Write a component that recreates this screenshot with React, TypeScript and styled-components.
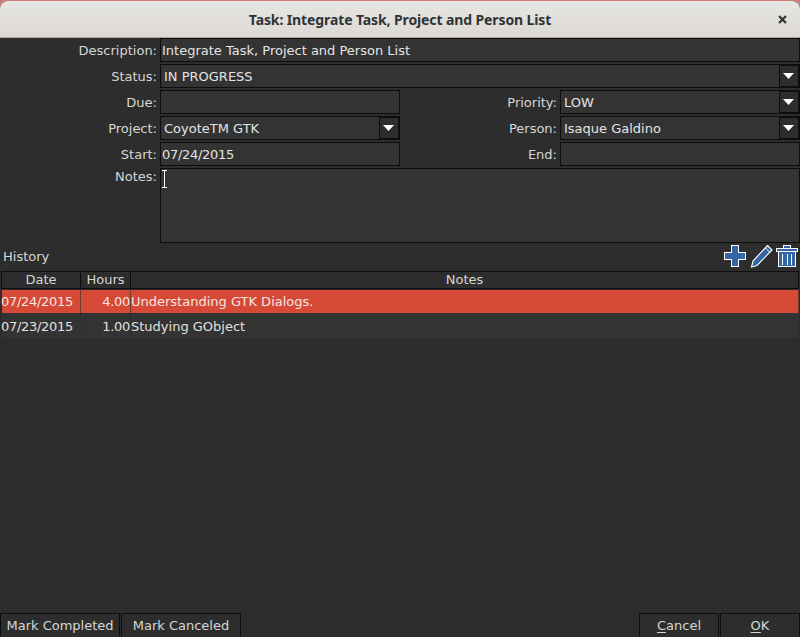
import styled, { createGlobalStyle } from 'styled-components';

const GlobalStyle = createGlobalStyle`
  html, body {
    margin: 0;
    padding: 0;
    width: 800px;
    height: 637px;
    overflow: hidden;
    background: #cf7d79;
  }
`;

const Window = styled.div`
  width: 800px;
  height: 636px;
  margin-top: 1px;
  display: flex;
  flex-direction: column;
  background: #2d2d2d;
  color: #d6d6d6;
  font-family: 'DejaVu Sans', sans-serif;
  font-size: 13px;
  border-radius: 8px 8px 0 0;
  overflow: hidden;
`;

const TitleBar = styled.div`
  height: 36px;
  flex: none;
  position: relative;
  display: flex;
  align-items: center;
  justify-content: center;
  background: linear-gradient(#e8e6e3, #dcd9d5);
  border-bottom: 1px solid #a8a49e;
  color: #2e3436;
  font-family: 'Noto Sans', sans-serif;
  font-weight: 700;
  font-size: 14px;
  letter-spacing: -0.11px;
`;

const CloseButton = styled.svg`
  position: absolute;
  right: 13px;
  top: 14px;
  width: 9px;
  height: 9px;
`;

const FormGrid = styled.div`
  display: grid;
  grid-template-columns: 160px 240px 160px 240px;
  row-gap: 2px;
  flex: none;
`;

const Label = styled.div`
  display: flex;
  align-items: center;
  justify-content: flex-end;
  padding-right: 3px;
  white-space: nowrap;
`;

const NotesLabel = styled(Label)`
  align-items: flex-start;
  padding-top: 1px;
`;

const Field = styled.div<{ $span?: number }>`
  grid-column: span ${(p) => p.$span ?? 1};
  box-sizing: border-box;
  height: 24px;
  display: flex;
  align-items: center;
  padding-left: 1px;
  background: #333333;
  border: 1px solid #0d0d0d;
  color: #e4e4e4;
  white-space: nowrap;
`;

const ComboField = styled(Field)`
  padding-left: 3px;
  justify-content: space-between;
`;

const ComboArrow = styled.div`
  box-sizing: border-box;
  width: 20px;
  height: 22px;
  flex: none;
  display: flex;
  align-items: center;
  justify-content: center;
  padding: 0 1px 1px 0;
  background: #2d2d2d;
  border: 1px solid #0d0d0d;
`;

const DateText = styled.span`
  letter-spacing: -0.3px;
`;

const NotesArea = styled.div`
  grid-column: span 3;
  box-sizing: border-box;
  height: 75px;
  background: #333333;
  border: 1px solid #0d0d0d;
  position: relative;
`;

const Caret = styled.svg`
  position: absolute;
  left: 1px;
  top: 1px;
  width: 5px;
  height: 18px;
`;

const HistoryBar = styled.div`
  flex: none;
  height: 27px;
  display: flex;
  align-items: center;
  justify-content: space-between;
  padding: 0 1px 0 3px;
`;

const ToolIcons = styled.div`
  display: flex;
  gap: 2px;
  align-items: center;
  margin-bottom: 1px;
`;

const ToolIcon = styled.svg`
  width: 24px;
  height: 24px;
  display: block;
`;

const Table = styled.div`
  flex: none;
  margin: 1px 1px 0 1px;
`;

const HeaderRow = styled.div`
  display: grid;
  grid-template-columns: 80px 50px 1fr;
  height: 18px;
  margin-bottom: 1px;
`;

const HeaderCell = styled.div`
  box-sizing: border-box;
  display: flex;
  align-items: center;
  justify-content: center;
  padding-bottom: 1px;
  border: 1px solid #0d0d0d;
  border-left: none;
  color: #d6d6d6;

  &:first-child {
    border-left: 1px solid #0d0d0d;
  }
`;

const Row = styled.div<{ $selected?: boolean; $height: number }>`
  display: grid;
  grid-template-columns: 79px 50px 1fr;
  height: ${(p) => p.$height}px;
  line-height: ${(p) => (p.$selected ? p.$height + 1 : p.$height + 3)}px;
  margin-left: 1px;
  background: ${(p) => (p.$selected ? '#d64937' : '#333333')};
  color: ${(p) => (p.$selected ? '#f6e4e0' : '#e0e0e0')};
`;

const Cell = styled.div<{ $right?: boolean }>`
  box-sizing: border-box;
  height: 100%;
  border-right: 1px solid rgba(45, 45, 45, 0.6);
  text-align: ${(p) => (p.$right ? 'right' : 'left')};
  white-space: nowrap;
`;

const DateCell = styled(Cell)`
  margin-left: -1px;
`;

const Spacer = styled.div`
  flex: 1;
`;

const ButtonBar = styled.div`
  flex: none;
  height: 24px;
  display: flex;
  justify-content: space-between;
`;

const ButtonGroup = styled.div`
  display: flex;
  gap: 1px;
`;

const Button = styled.div<{ $width: number }>`
  box-sizing: border-box;
  width: ${(p) => p.$width}px;
  height: 24px;
  display: flex;
  align-items: center;
  justify-content: center;
  background: #2d2d2d;
  border: 1px solid #0d0d0d;
  border-bottom: none;
  color: #d6d6d6;
  white-space: nowrap;

  u {
    text-underline-offset: 2px;
  }
`;

const Arrow = () => (
  <svg width="11" height="6" viewBox="0 0 11 6">
    <path d="M0 0h11L5.5 6z" fill="#ffffff" />
  </svg>
);

const BLUE = '#3465a4';

const App = () => (
  <>
    <GlobalStyle />
    <Window>
      <TitleBar>
        Task: Integrate Task, Project and Person List
        <CloseButton viewBox="0 0 9 9">
          <path d="M1 1l7 7M8 1l-7 7" stroke="#2e3436" strokeWidth="2.2" />
        </CloseButton>
      </TitleBar>
      <FormGrid>
        <Label>Description:</Label>
        <Field $span={3}>Integrate Task, Project and Person List</Field>
        <Label>Status:</Label>
        <ComboField $span={3}>
          <span>IN PROGRESS</span>
          <ComboArrow><Arrow /></ComboArrow>
        </ComboField>
        <Label>Due:</Label>
        <Field />
        <Label>Priority:</Label>
        <ComboField>
          <span>LOW</span>
          <ComboArrow><Arrow /></ComboArrow>
        </ComboField>
        <Label>Project:</Label>
        <ComboField>
          <span>CoyoteTM GTK</span>
          <ComboArrow><Arrow /></ComboArrow>
        </ComboField>
        <Label>Person:</Label>
        <ComboField>
          <span>Isaque Galdino</span>
          <ComboArrow><Arrow /></ComboArrow>
        </ComboField>
        <Label>Start:</Label>
        <Field><DateText>07/24/2015</DateText></Field>
        <Label>End:</Label>
        <Field />
        <NotesLabel>Notes:</NotesLabel>
        <NotesArea>
          <Caret viewBox="0 0 5 18">
            <path d="M0 .5h5M0 17.5h5M2.5 0v18" stroke="#ffffff" strokeWidth="1" />
          </Caret>
        </NotesArea>
      </FormGrid>
      <HistoryBar>
        <span>History</span>
        <ToolIcons>
          <ToolIcon viewBox="0 0 24 24" shapeRendering="crispEdges">
            <path d="M8.5 1.500h7v7h7v7h-7v7h-7v-7h-7v-7h7z" fill={BLUE} stroke="#ffffff" strokeWidth="1" />
          </ToolIcon>
          <ToolIcon viewBox="0 0 24 24">
            <path d="M18.500 1.500l4.500 4.500L8 21.500l-5.500 1.500L4 17z" fill={BLUE} stroke="#ffffff" strokeWidth="1.100" />
            <path d="M16.500 4l4.500 4.500" stroke="#ffffff" strokeWidth="1" />
          </ToolIcon>
          <ToolIcon viewBox="0 0 24 24" shapeRendering="crispEdges">
            <path d="M8.500 5.500v-4h7v4" fill={BLUE} stroke="#ffffff" strokeWidth="1" />
            <path d="M1.500 4.500h21v3h-21z" fill={BLUE} stroke="#ffffff" strokeWidth="1" />
            <path d="M3.500 7.500h17v15h-17z" fill={BLUE} stroke="#ffffff" strokeWidth="1" />
            <path d="M7.500 10v11M12 10v11M16.500 10v11" stroke="#ffffff" strokeWidth="1" />
          </ToolIcon>
        </ToolIcons>
      </HistoryBar>
      <Table>
        <HeaderRow>
          <HeaderCell>Date</HeaderCell>
          <HeaderCell>Hours</HeaderCell>
          <HeaderCell>Notes</HeaderCell>
        </HeaderRow>
        <Row $selected $height={23}>
          <DateCell><DateText>07/24/2015</DateText></DateCell>
          <Cell $right><DateText>4.00</DateText></Cell>
          <Cell>Understanding GTK Dialogs.</Cell>
        </Row>
        <Row $height={25}>
          <DateCell><DateText>07/23/2015</DateText></DateCell>
          <Cell $right><DateText>1.00</DateText></Cell>
          <Cell>Studying GObject</Cell>
        </Row>
      </Table>
      <Spacer />
      <ButtonBar>
        <ButtonGroup>
          <Button $width={120}>Mark Completed</Button>
          <Button $width={120}>Mark Canceled</Button>
        </ButtonGroup>
        <ButtonGroup>
          <Button $width={80}><span><u>C</u>ancel</span></Button>
          <Button $width={80}><span><u>O</u>K</span></Button>
        </ButtonGroup>
      </ButtonBar>
    </Window>
  </>
);

export default App;
